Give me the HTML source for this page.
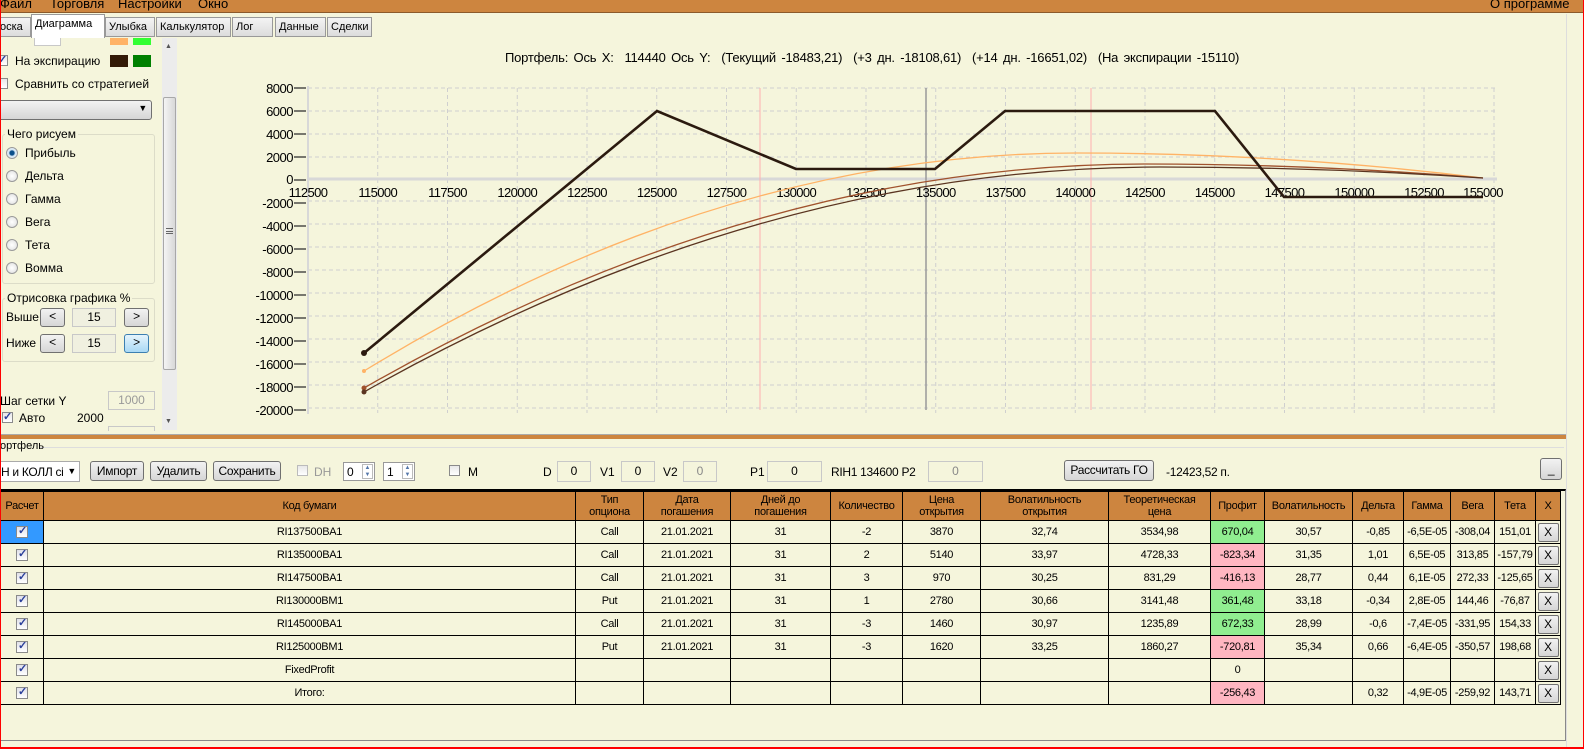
<!DOCTYPE html>
<html><head><meta charset="utf-8">
<style>
*{box-sizing:border-box;margin:0;padding:0}
body{width:1584px;height:749px;overflow:hidden;background:#F5F5DC;font-family:"Liberation Sans Narrow","Liberation Sans",sans-serif;font-size:12px;color:#000;position:relative}
.a{position:absolute;white-space:nowrap}
.menu{left:0;top:0;width:1584px;height:13px;background:#CD853F;border-bottom:1px solid #8b5a2b}
.menu span{position:absolute;top:-4px;font-size:13px;font-family:"Liberation Sans",sans-serif}
.tab{position:absolute;top:17px;height:20px;border:1px solid #999;background:linear-gradient(#f4f4f4,#dcdcdc);font-family:"Liberation Sans",sans-serif;font-size:11px;padding:3px 3px;line-height:13px;overflow:hidden}
.tab.sel{top:14px;height:24px;background:#fff;border-bottom:none;padding-top:3px}
.btn{position:absolute;border:1px solid #707070;border-radius:3px;background:linear-gradient(#f2f2f2,#d6d6d6);text-align:center;font-size:12px;letter-spacing:-0.3px}
.inp{position:absolute;border:1px solid #c8c8c8;background:#F5F5DC;text-align:center}
.cb{position:absolute;width:11px;height:11px;border:1px solid #8a8a8a;background:linear-gradient(#e8e8e8,#fff)}
.cb.on::after{content:"✓";position:absolute;left:0px;top:-3px;font-size:11px;color:#2a3f9a;font-weight:bold}
.rad{position:absolute;width:12px;height:12px;border-radius:50%;border:1px solid #9a9a9a;background:radial-gradient(#fff,#ddd)}
.grp{position:absolute;border:1px solid #dcdcc8;border-radius:3px}
.grp b{position:absolute;top:-8px;left:2px;background:#F5F5DC;font-weight:normal;padding:0 2px;font-family:"Liberation Sans",sans-serif}
.lf{font-family:"Liberation Sans",sans-serif;font-size:12px}
table{position:absolute;left:0;top:491px;border-collapse:collapse;table-layout:fixed}
td,th{border:1px solid #000;text-align:center;font-weight:normal;font-size:11px;letter-spacing:-0.3px;height:23px;padding:0;overflow:hidden;white-space:nowrap}
th{background:#CD853F;height:29px;line-height:12px}
.g{background:#90EE90}.p{background:#FFB6C1}
.xb{display:block;margin:0 auto;width:21px;height:19px;border:1px solid #707070;border-radius:2px;background:linear-gradient(#f2f2f2,#d6d6d6);line-height:17px;font-size:12px}
.ck{display:inline-block;width:12px;height:12px;border:1px solid #8a8a8a;background:linear-gradient(#e0e0e8,#fff);position:relative;vertical-align:middle}
.ck::after{content:"✓";position:absolute;left:1px;top:-3px;font-size:11px;color:#2a3f9a;font-weight:bold}
.tb{font-size:12px;letter-spacing:-0.3px}
</style></head><body>
<div class="a menu"><span style="left:0">Файл</span><span style="left:50px">Торговля</span><span style="left:118px">Настройки</span><span style="left:198px">Окно</span><span style="left:1490px">О программе</span></div>

<div class="tab" style="left:-4px;width:35px">оска</div>
<div class="tab" style="left:105px;width:50px">Улыбка</div>
<div class="tab" style="left:156px;width:75px">Калькулятор</div>
<div class="tab" style="left:232px;width:41px">Лог</div>
<div class="tab" style="left:275px;width:51px">Данные</div>
<div class="tab" style="left:327px;width:45px">Сделки</div>
<div class="tab sel" style="left:31px;width:74px">Диаграмма</div>

<div class="a lf" style="left:0;top:38px;height:8px;width:162px;overflow:hidden">
 <div class="inp" style="left:34px;top:-8px;width:27px;height:16px;background:#fff"></div>
 <div class="a" style="left:110px;top:0;width:18px;height:7px;background:#FFB366"></div>
 <div class="a" style="left:133px;top:0;width:18px;height:7px;background:#33FF33"></div>
</div>
<div class="cb on" style="left:-3px;top:55px"></div><div class="a lf" style="left:15px;top:54px">На экспирацию</div>
<div class="a" style="left:110px;top:55px;width:18px;height:12px;background:#331A06"></div>
<div class="a" style="left:133px;top:55px;width:18px;height:12px;background:#008000"></div>
<div class="cb" style="left:-3px;top:78px"></div><div class="a lf" style="left:15px;top:77px">Сравнить со стратегией</div>
<div class="btn" style="left:-4px;top:100px;width:156px;height:20px;border-radius:3px"><span style="position:absolute;right:4px;top:2px;font-size:9px">▼</span></div>

<div class="grp" style="left:2px;top:134px;width:153px;height:150px"><b>Чего рисуем</b></div>
<div class="rad" style="left:6px;top:147px;background:radial-gradient(#0a4f8a 30%,#cfe3f3 45%,#fff)"></div><div class="a lf" style="left:25px;top:146px">Прибыль</div>
<div class="rad" style="left:6px;top:170px"></div><div class="a lf" style="left:25px;top:169px">Дельта</div>
<div class="rad" style="left:6px;top:193px"></div><div class="a lf" style="left:25px;top:192px">Гамма</div>
<div class="rad" style="left:6px;top:216px"></div><div class="a lf" style="left:25px;top:215px">Вега</div>
<div class="rad" style="left:6px;top:239px"></div><div class="a lf" style="left:25px;top:238px">Тета</div>
<div class="rad" style="left:6px;top:262px"></div><div class="a lf" style="left:25px;top:261px">Вомма</div>

<div class="grp" style="left:2px;top:298px;width:153px;height:64px"><b>Отрисовка графика %</b></div>
<div class="a lf" style="left:6px;top:310px">Выше</div>
<div class="btn" style="left:40px;top:308px;width:25px;height:19px">&lt;</div>
<div class="inp" style="left:72px;top:308px;width:44px;height:19px;line-height:17px;background:#F0F0E0">15</div>
<div class="btn" style="left:124px;top:308px;width:25px;height:19px">&gt;</div>
<div class="a lf" style="left:6px;top:336px">Ниже</div>
<div class="btn" style="left:40px;top:334px;width:25px;height:19px">&lt;</div>
<div class="inp" style="left:72px;top:334px;width:44px;height:19px;line-height:17px;background:#F0F0E0">15</div>
<div class="btn" style="left:124px;top:334px;width:25px;height:19px;border-color:#3c7fb1;background:linear-gradient(#e5f4fc,#a9d9f5)">&gt;</div>

<div class="a lf" style="left:0;top:394px">Шаг сетки Y</div>
<div class="inp" style="left:108px;top:391px;width:47px;height:19px;line-height:17px;color:#999;background:#F5F5DC">1000</div>
<div class="cb on" style="left:2px;top:412px"></div><div class="a lf" style="left:19px;top:411px">Авто</div>
<div class="a lf" style="left:77px;top:411px">2000</div>
<div class="inp" style="left:108px;top:426px;width:47px;height:10px;border-bottom:none"></div>

<div class="a" style="left:162px;top:38px;width:15px;height:392px;background:#ececec"></div>
<div class="a" style="left:165px;top:43px;font-size:7px;color:#555">▲</div>
<div class="a" style="left:163px;top:97px;width:13px;height:273px;border:1px solid #a8a8a8;border-radius:2px;background:linear-gradient(90deg,#f4f4f4,#d8d8d8)"></div>
<div class="a" style="left:166px;top:228px;width:7px;height:6px;border-top:1px solid #666;border-bottom:1px solid #666"></div>
<div class="a" style="left:166px;top:231px;width:7px;height:1px;background:#666"></div>
<div class="a" style="left:165px;top:418px;font-size:7px;color:#555">▼</div>

<div class="a" style="left:505px;top:50px;font-size:13px;letter-spacing:-0.2px;word-spacing:2px">Портфель: Ось X:&nbsp; 114440 Ось Y:&nbsp; (Текущий -18483,21)&nbsp; (+3 дн. -18108,61)&nbsp; (+14 дн. -16651,02)&nbsp; (На экспирации -15110)</div>
<svg class="a" style="left:0;top:0" width="1584" height="440" font-family="Liberation Sans Narrow, Liberation Sans, sans-serif" font-size="13">
<g stroke="#cfcfcf" stroke-dasharray="4,3" stroke-width="1">
<line x1="377.75" y1="88" x2="377.75" y2="413"/><line x1="447.5" y1="88" x2="447.5" y2="413"/><line x1="517.25" y1="88" x2="517.25" y2="413"/><line x1="587" y1="88" x2="587" y2="413"/><line x1="656.75" y1="88" x2="656.75" y2="413"/><line x1="726.5" y1="88" x2="726.5" y2="413"/><line x1="796.25" y1="88" x2="796.25" y2="413"/><line x1="866" y1="88" x2="866" y2="413"/><line x1="935.75" y1="88" x2="935.75" y2="413"/><line x1="1005.5" y1="88" x2="1005.5" y2="413"/><line x1="1075.25" y1="88" x2="1075.25" y2="413"/><line x1="1145" y1="88" x2="1145" y2="413"/><line x1="1214.75" y1="88" x2="1214.75" y2="413"/><line x1="1284.5" y1="88" x2="1284.5" y2="413"/><line x1="1354.25" y1="88" x2="1354.25" y2="413"/><line x1="1424" y1="88" x2="1424" y2="413"/><line x1="1494" y1="88" x2="1494" y2="413"/>
<line x1="308" y1="88" x2="1497" y2="88"/><line x1="308" y1="111" x2="1497" y2="111"/><line x1="308" y1="134" x2="1497" y2="134"/><line x1="308" y1="157" x2="1497" y2="157"/><line x1="308" y1="201" x2="1497" y2="201"/><line x1="308" y1="224" x2="1497" y2="224"/><line x1="308" y1="247" x2="1497" y2="247"/><line x1="308" y1="270" x2="1497" y2="270"/><line x1="308" y1="293" x2="1497" y2="293"/><line x1="308" y1="316" x2="1497" y2="316"/><line x1="308" y1="339" x2="1497" y2="339"/><line x1="308" y1="362" x2="1497" y2="362"/><line x1="308" y1="385" x2="1497" y2="385"/><line x1="308" y1="408" x2="1497" y2="408"/>
</g>
<line x1="308" y1="86" x2="308" y2="414" stroke="#d8d8d8" stroke-width="2"/>
<line x1="308" y1="179" x2="1497" y2="179" stroke="#d8d8d8" stroke-width="3"/>
<line x1="760" y1="88" x2="760" y2="410" stroke="#ffb0b0"/>
<line x1="1091" y1="88" x2="1091" y2="410" stroke="#ffb0b0"/>
<line x1="926" y1="88" x2="926" y2="410" stroke="#999" stroke-width="1.5"/>
<g stroke="#333" stroke-width="1.3">
<line x1="294" y1="88" x2="306" y2="88"/><line x1="294" y1="111" x2="306" y2="111"/><line x1="294" y1="134" x2="306" y2="134"/><line x1="294" y1="157" x2="306" y2="157"/><line x1="294" y1="180" x2="306" y2="180"/><line x1="294" y1="203" x2="306" y2="203"/><line x1="294" y1="226" x2="306" y2="226"/><line x1="294" y1="249" x2="306" y2="249"/><line x1="294" y1="272" x2="306" y2="272"/><line x1="294" y1="295" x2="306" y2="295"/><line x1="294" y1="318" x2="306" y2="318"/><line x1="294" y1="341" x2="306" y2="341"/><line x1="294" y1="364" x2="306" y2="364"/><line x1="294" y1="387" x2="306" y2="387"/><line x1="294" y1="410" x2="306" y2="410"/>
</g>
<g text-anchor="end" fill="#000" letter-spacing="-0.5">
<text x="293" y="93">8000</text><text x="293" y="116">6000</text><text x="293" y="139">4000</text><text x="293" y="162">2000</text><text x="293" y="184">0</text><text x="293" y="208">-2000</text><text x="293" y="231">-4000</text><text x="293" y="254">-6000</text><text x="293" y="277">-8000</text><text x="293" y="300">-10000</text><text x="293" y="323">-12000</text><text x="293" y="346">-14000</text><text x="293" y="369">-16000</text><text x="293" y="392">-18000</text><text x="293" y="415">-20000</text>
</g>
<g text-anchor="middle" fill="#000" letter-spacing="-0.6">
<text x="308" y="197">112500</text><text x="377.75" y="197">115000</text><text x="447.5" y="197">117500</text><text x="517.25" y="197">120000</text><text x="587" y="197">122500</text><text x="656.75" y="197">125000</text><text x="726.5" y="197">127500</text><text x="796.25" y="197">130000</text><text x="866" y="197">132500</text><text x="935.75" y="197">135000</text><text x="1005.5" y="197">137500</text><text x="1075.25" y="197">140000</text><text x="1145" y="197">142500</text><text x="1214.75" y="197">145000</text><text x="1284.5" y="197">147500</text><text x="1354.25" y="197">150000</text><text x="1424" y="197">152500</text><text x="1483" y="197">155000</text>
</g>
<g fill="none" stroke-width="1.3">
<path d="M364,371 Q720,153 1076,153 Q1280,153 1483,178" stroke="#FFB366"/>
<path d="M364,388 Q755,164 1145,164 Q1314,164 1483,178" stroke="#A0522D"/>
<path d="M364,392 Q762,167 1160,167 Q1321,167 1483,178" stroke="#5a3420"/>
<path d="M364,353 L657,111 L796,169 L935,169 L1005,111 L1215,111 L1284,197 L1483,197" stroke="#2B1A0F" stroke-width="2.6"/>
</g>
<circle cx="364" cy="371" r="2" fill="#FFB366"/><circle cx="364" cy="388" r="2.5" fill="#A0522D"/><circle cx="364" cy="392" r="2.5" fill="#5a3420"/><circle cx="364" cy="353" r="3" fill="#2B1A0F"/>
</svg>

<div class="a" style="left:0;top:431px;width:1584px;height:4px;background:#F5F5DC;border-bottom:1px solid #aaa"></div>
<div class="a" style="left:0;top:435px;width:1566px;height:4px;background:#CD853F"></div>
<div class="a" style="left:40px;top:447px;width:1524px;height:1px;background:#ddd"></div>
<div class="a" style="left:0;top:440px;font-size:11px">ортфель</div>

<div class="inp tb" style="left:-2px;top:461px;width:82px;height:21px;background:#fff;border-color:#aaa;text-align:left;padding:3px 2px;overflow:hidden">Н и КОЛЛ сі<span style="font-size:9px;position:absolute;right:3px;top:4px;background:#fff;padding-left:2px">▼</span></div>
<div class="btn" style="left:90px;top:461px;width:54px;height:20px;line-height:18px">Импорт</div>
<div class="btn" style="left:150px;top:461px;width:57px;height:20px;line-height:18px">Удалить</div>
<div class="btn" style="left:213px;top:461px;width:68px;height:20px;line-height:18px">Сохранить</div>
<div class="cb" style="left:297px;top:465px;border-color:#bbb"></div><div class="a" style="left:314px;top:465px;color:#999">DH</div>
<div class="inp" style="left:343px;top:462px;width:32px;height:19px;background:#fff;text-align:left;padding:2px 3px;border-color:#999">0<span style="position:absolute;right:1px;top:1px;width:11px;height:15px;border:1px solid #bbb;font-size:6px;line-height:7px;text-align:center;color:#5577aa">▲<br>▼</span></div>
<div class="inp" style="left:383px;top:462px;width:32px;height:19px;background:#fff;text-align:left;padding:2px 3px;border-color:#999">1<span style="position:absolute;right:1px;top:1px;width:11px;height:15px;border:1px solid #bbb;font-size:6px;line-height:7px;text-align:center;color:#5577aa">▲<br>▼</span></div>
<div class="cb" style="left:449px;top:465px"></div><div class="a" style="left:468px;top:465px">M</div>
<div class="a" style="left:543px;top:465px">D</div><div class="inp" style="left:557px;top:461px;width:34px;height:21px;line-height:19px">0</div>
<div class="a" style="left:600px;top:465px">V1</div><div class="inp" style="left:621px;top:461px;width:34px;height:21px;line-height:19px">0</div>
<div class="a" style="left:663px;top:465px">V2</div><div class="inp" style="left:683px;top:461px;width:34px;height:21px;line-height:19px;color:#888">0</div>
<div class="a" style="left:750px;top:465px">P1</div><div class="inp" style="left:767px;top:461px;width:55px;height:21px;line-height:19px">0</div>
<div class="a tb" style="left:831px;top:465px">RIH1 134600&nbsp;P2</div><div class="inp" style="left:928px;top:461px;width:55px;height:21px;line-height:19px;color:#888">0</div>
<div class="btn" style="left:1064px;top:460px;width:90px;height:21px;line-height:19px">Рассчитать ГО</div>
<div class="a tb" style="left:1166px;top:465px">-12423,52 п.</div>
<div class="btn" style="left:1540px;top:458px;width:22px;height:22px;line-height:20px">_</div>

<div class="a" style="left:0;top:489px;width:1566px;height:252px;border:1px solid #888;border-top:2px solid #000"></div>
<table>
<colgroup><col style="width:43px"><col style="width:532px"><col style="width:68px"><col style="width:87px"><col style="width:100px"><col style="width:72px"><col style="width:78px"><col style="width:128px"><col style="width:102px"><col style="width:54px"><col style="width:88px"><col style="width:51px"><col style="width:47px"><col style="width:44px"><col style="width:41px"><col style="width:25px"></colgroup>
<tr><th>Расчет</th><th>Код бумаги</th><th>Тип<br>опциона</th><th>Дата<br>погашения</th><th>Дней до<br>погашения</th><th>Количество</th><th>Цена<br>открытия</th><th>Волатильность<br>открытия</th><th>Теоретическая<br>цена</th><th>Профит</th><th>Волатильность</th><th>Дельта</th><th>Гамма</th><th>Вега</th><th>Тета</th><th>X</th></tr>
<tr><td style="background:#3399FF"><span class="ck"></span></td><td>RI137500BA1</td><td>Call</td><td>21.01.2021</td><td>31</td><td>-2</td><td>3870</td><td>32,74</td><td>3534,98</td><td class="g">670,04</td><td>30,57</td><td>-0,85</td><td>-6,5E-05</td><td>-308,04</td><td>151,01</td><td><span class="xb">X</span></td></tr>
<tr><td><span class="ck"></span></td><td>RI135000BA1</td><td>Call</td><td>21.01.2021</td><td>31</td><td>2</td><td>5140</td><td>33,97</td><td>4728,33</td><td class="p">-823,34</td><td>31,35</td><td>1,01</td><td>6,5E-05</td><td>313,85</td><td>-157,79</td><td><span class="xb">X</span></td></tr>
<tr><td><span class="ck"></span></td><td>RI147500BA1</td><td>Call</td><td>21.01.2021</td><td>31</td><td>3</td><td>970</td><td>30,25</td><td>831,29</td><td class="p">-416,13</td><td>28,77</td><td>0,44</td><td>6,1E-05</td><td>272,33</td><td>-125,65</td><td><span class="xb">X</span></td></tr>
<tr><td><span class="ck"></span></td><td>RI130000BM1</td><td>Put</td><td>21.01.2021</td><td>31</td><td>1</td><td>2780</td><td>30,66</td><td>3141,48</td><td class="g">361,48</td><td>33,18</td><td>-0,34</td><td>2,8E-05</td><td>144,46</td><td>-76,87</td><td><span class="xb">X</span></td></tr>
<tr><td><span class="ck"></span></td><td>RI145000BA1</td><td>Call</td><td>21.01.2021</td><td>31</td><td>-3</td><td>1460</td><td>30,97</td><td>1235,89</td><td class="g">672,33</td><td>28,99</td><td>-0,6</td><td>-7,4E-05</td><td>-331,95</td><td>154,33</td><td><span class="xb">X</span></td></tr>
<tr><td><span class="ck"></span></td><td>RI125000BM1</td><td>Put</td><td>21.01.2021</td><td>31</td><td>-3</td><td>1620</td><td>33,25</td><td>1860,27</td><td class="p">-720,81</td><td>35,34</td><td>0,66</td><td>-6,4E-05</td><td>-350,57</td><td>198,68</td><td><span class="xb">X</span></td></tr>
<tr><td><span class="ck"></span></td><td>FixedProfit</td><td></td><td></td><td></td><td></td><td></td><td></td><td></td><td>0</td><td></td><td></td><td></td><td></td><td></td><td><span class="xb">X</span></td></tr>
<tr><td><span class="ck"></span></td><td>Итого:</td><td></td><td></td><td></td><td></td><td></td><td></td><td></td><td class="p">-256,43</td><td></td><td>0,32</td><td>-4,9E-05</td><td>-259,92</td><td>143,71</td><td><span class="xb">X</span></td></tr>
</table>

<div class="a" style="left:0;top:0;width:1584px;height:749px;border:1px solid #ff0000;border-top:none;border-bottom:2px solid #ff0000;pointer-events:none"></div>
<div class="a" style="left:1566px;top:14px;width:17px;height:733px;background:#F5F5DC;border-left:1px solid #ddd"></div>
</body></html>
